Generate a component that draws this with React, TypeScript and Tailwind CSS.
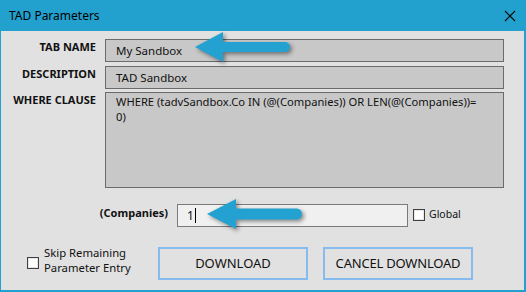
import React from "react";

const font = { fontFamily: '"Noto Sans", "Open Sans", Arial, sans-serif' };

function Arrow({ tipX, tipY, headX, halfHead, shaftHalf, endX }: { tipX: number; tipY: number; headX: number; halfHead: number; shaftHalf: number; endX: number }) {
  const r = shaftHalf;
  const d = `M ${tipX} ${tipY} L ${headX} ${tipY - halfHead} L ${headX} ${tipY - shaftHalf} L ${endX - r} ${tipY - shaftHalf} A ${r} ${r} 0 0 1 ${endX - r} ${tipY + shaftHalf} L ${headX} ${tipY + shaftHalf} L ${headX} ${tipY + halfHead} Z`;
  return <path d={d} fill="#23A2D2" style={{ filter: "drop-shadow(2px 2px 2px rgba(0,0,0,0.45))" }} />;
}

function Check() {
  return <div className="w-[12px] h-[12px] border border-[#404040] bg-white shrink-0 shadow-[inset_0_0_0_1px_#e6e6e6]" />;
}

export default function App() {
  return (
    <div className="relative w-[526px] h-[292px] bg-[#22A0CE] flex flex-col overflow-hidden" style={font}>
      <div className="h-[31px] flex items-center justify-between pl-[9px] pr-[10px] shrink-0">
        <span className="text-[12px] text-black">TAD Parameters</span>
        <svg width="12" height="12" viewBox="0 0 12 12">
          <path d="M1 1 L11 11 M11 1 L1 11" stroke="#000" strokeWidth="1.1" />
        </svg>
      </div>
      <div className="flex-1 ml-[1px] mr-[2px] mb-[2px] bg-[#E1E1E1] flex flex-col pt-[8px]">
        <div className="grid grid-cols-[95px_399px] gap-x-[9px] gap-y-[4px]">
          <div className="text-right text-[11px] font-bold leading-[16px] text-[#111]">TAB NAME</div>
          <div className="h-[23px] bg-[#C8C8C8] border border-[#6B6B6B] flex items-center pl-[10px] text-[11.5px] text-[#111]">My Sandbox</div>
          <div className="text-right text-[11px] font-bold leading-[16px] text-[#111]">DESCRIPTION</div>
          <div className="h-[23px] bg-[#C8C8C8] border border-[#6B6B6B] flex items-center pl-[10px] text-[11.5px] text-[#111]">TAD Sandbox</div>
          <div className="text-right text-[11px] font-bold leading-[16px] text-[#111] -mt-[1px]">WHERE CLAUSE</div>
          <div className="h-[96px] bg-[#C8C8C8] border border-[#6B6B6B] pl-[10px] pt-[1px] text-[11.2px] leading-[15px] text-[#111] -mt-[1px] whitespace-nowrap overflow-hidden">
            WHERE (tadvSandbox.Co IN (@(Companies)) OR LEN(@(Companies))=
            <br />
            0)
          </div>
        </div>
        <div className="flex items-center mt-[16px] h-[23px]">
          <div className="w-[167px] text-right text-[11px] font-bold text-[#111] -mt-[4px]">(Companies)</div>
          <div className="ml-[9px] w-[231px] h-[23px] bg-[#F0F0F0] border border-[#7A7A7A] flex items-center pl-[9px] text-[12px] text-[#111]">
            1<span className="inline-block w-[1px] h-[15px] bg-black ml-[1px]" />
          </div>
          <div className="ml-[5px] flex items-center gap-[4px] -mt-[2px]">
            <Check />
            <span className="text-[10.5px] text-[#111]">Global</span>
          </div>
        </div>
        <div className="flex items-start mt-[20px]">
          <div className="ml-[26px] flex items-start gap-[5px] w-[131px] -mt-[2px]">
            <div className="mt-[12px]"><Check /></div>
            <div className="text-[11.3px] leading-[15px] text-[#111]">Skip Remaining<br />Parameter Entry</div>
          </div>
          <button className="w-[150px] h-[33px] border-2 border-[#86BBF0] bg-[#E1E1E1] text-[13px] text-[#111] flex items-center justify-center">DOWNLOAD</button>
          <button className="ml-[15px] w-[150px] h-[33px] border-2 border-[#86BBF0] bg-[#E1E1E1] text-[13px] text-[#111] flex items-center justify-center tracking-[-0.2px]">CANCEL DOWNLOAD</button>
        </div>
      </div>
      <svg className="absolute inset-0 pointer-events-none" width="526" height="292" viewBox="0 0 526 292">
        <Arrow tipX={195} tipY={47} headX={223} halfHead={15} shaftHalf={5} endX={290} />
        <Arrow tipX={207} tipY={214} headX={236} halfHead={15} shaftHalf={5.5} endX={302} />
      </svg>
    </div>
  );
}
